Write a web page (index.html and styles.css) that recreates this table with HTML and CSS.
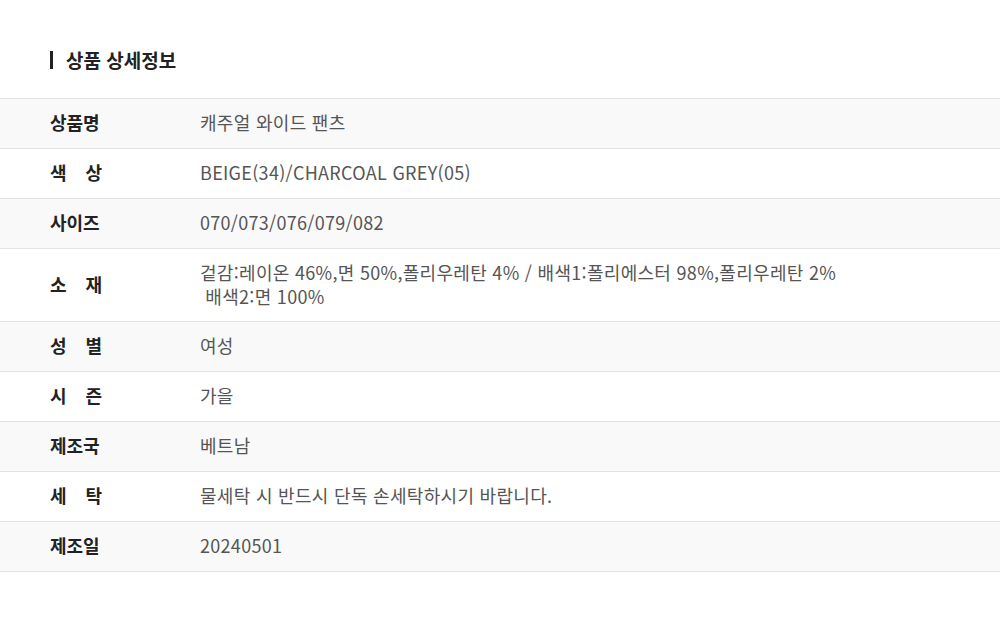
FILE: index.html
```html
<!DOCTYPE html>
<html lang="ko">
<head>
  <meta charset="UTF-8" />
  <meta name="viewport" content="width=device-width, initial-scale=1.0" />
  <title>상품 상세정보</title>
  <link rel="stylesheet" href="styles.css">
</head>
<body>
  <div class="detail">
    <h2 class="detail-title">상품 상세정보</h2>

    <table class="info">
      <tr>
        <th><span class="label">상품명</span></th>
        <td>캐주얼 와이드 팬츠</td>
      </tr>
      <tr>
        <th><span class="label">색 상</span></th>
        <td>BEIGE(34)/CHARCOAL GREY(05)</td>
      </tr>
      <tr>
        <th><span class="label">사이즈</span></th>
        <td>070/073/076/079/082</td>
      </tr>
      <tr>
        <th><span class="label">소 재</span></th>
        <td class="multi">겉감:레이온 46%,면 50%,폴리우레탄 4% / 배색1:폴리에스터 98%,폴리우레탄 2%<br>&nbsp;배색2:면 100%</td>
      </tr>
      <tr>
        <th><span class="label">성 별</span></th>
        <td>여성</td>
      </tr>
      <tr>
        <th><span class="label">시 즌</span></th>
        <td>가을</td>
      </tr>
      <tr>
        <th><span class="label">제조국</span></th>
        <td>베트남</td>
      </tr>
      <tr>
        <th><span class="label">세 탁</span></th>
        <td>물세탁 시 반드시 단독 손세탁하시기 바랍니다.</td>
      </tr>
      <tr>
        <th><span class="label">제조일</span></th>
        <td>20240501</td>
      </tr>
    </table>
  </div>
</body>
</html>
```

FILE: styles.css
```css
body {
  margin: 0;
  padding: 0;
  background: #fff;
  font-family: "Noto Sans CJK KR", "Noto Sans", sans-serif;
  color: #222;
}

.detail {
  padding-top: 51px;
}

.detail-title {
  margin: 0 0 29px 50px;
  padding-left: 13px;
  border-left: 3px solid #222;
  font-size: 19px;
  line-height: 18px;
  font-weight: 700;
  color: #222;
}

.info {
  width: 100%;
  border-collapse: collapse;
  border-top: 1px solid #e2e2e2;
}

.info tr {
  border-bottom: 1px solid #e2e2e2;
}

.info tr:nth-child(odd) {
  background: #f9f9f9;
}

.info th,
.info td {
  padding: 11px 0 14px;
  line-height: 24px;
  text-align: left;
  vertical-align: middle;
}

.info th {
  width: 150px;
  padding-left: 50px;
  font-size: 18px;
  font-weight: 700;
  color: #222;
}

.label {
  display: inline-block;
  width: 52px;
  text-align: justify;
  text-align-last: justify;
}

.info td {
  font-size: 18px;
  color: #555;
  letter-spacing: 0.3px;
}

.info td.multi {
  padding-bottom: 13px;
}
```
